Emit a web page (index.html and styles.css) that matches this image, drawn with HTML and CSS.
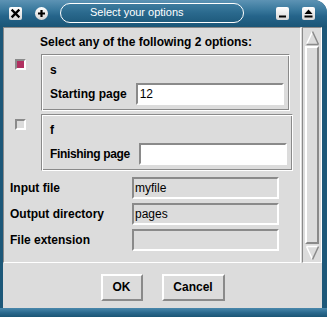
FILE: index.html
```html
<!DOCTYPE html>
<html>
<head>
<meta charset="utf-8">
<link rel="stylesheet" href="styles.css">
</head>
<body>
<div class="win">
  <div class="title">
    <span class="tbtn sq">
      <svg width="13" height="13" viewBox="0 0 13 13"><path d="M3.5 3.5 L9.5 9.5 M9.5 3.5 L3.5 9.5" stroke="#000" stroke-width="2.4" stroke-linecap="square"/></svg>
    </span>
    <span class="tbtn circ">
      <svg width="13" height="13" viewBox="0 0 13 13"><path d="M6.5 3 V10 M3 6.5 H10" stroke="#000" stroke-width="2.2"/></svg>
    </span>
    <div class="pill">Select your options</div>
    <span class="tbtn sq">
      <svg width="13" height="13" viewBox="0 0 13 13"><rect x="3" y="8.5" width="7" height="2" fill="#000"/></svg>
    </span>
    <span class="tbtn sq">
      <svg width="13" height="13" viewBox="0 0 13 13"><path d="M6.5 2.5 L10.5 7 H2.5 Z" fill="#000"/><rect x="2.5" y="8.5" width="8" height="2" fill="#000"/></svg>
    </span>
  </div>
  <div class="body">
    <div class="upper">
      <div class="frame">
        <div class="heading">Select any of the following 2 options:</div>
        <div class="opt">
          <span class="check on"></span>
          <div class="group">
            <div class="gname">s</div>
            <div class="field"><span class="lbl">Starting page</span><span class="entry white">12</span></div>
          </div>
        </div>
        <div class="opt">
          <span class="check"></span>
          <div class="group">
            <div class="gname">f</div>
            <div class="field"><span class="lbl tight">Finishing page</span><span class="entry white"></span></div>
          </div>
        </div>
        <div class="grid">
          <span class="lbl">Input file</span><span class="entry">myfile</span>
          <span class="lbl">Output directory</span><span class="entry">pages</span>
          <span class="lbl">File extension</span><span class="entry"></span>
        </div>
      </div>
      <div class="scrollbar">
        <div class="arrow">
          <svg width="15" height="16" viewBox="0 0 15 16"><path d="M7.5 1.5 L1.5 14.5" stroke="#fff" stroke-width="1.5"/><path d="M7.5 1.5 L13.5 14.5 M1.5 14.5 H13.5" stroke="#8a8a8a" stroke-width="1.5"/></svg>
        </div>
        <div class="slider"></div>
        <div class="arrow">
          <svg width="15" height="16" viewBox="0 0 15 16"><path d="M1.5 1.5 H13.5 M1.5 1.5 L7.5 14.5" stroke="#fff" stroke-width="1.5"/><path d="M13.5 1.5 L7.5 14.5" stroke="#8a8a8a" stroke-width="1.5"/></svg>
        </div>
      </div>
    </div>
    <div class="buttons">
      <span class="btn ok">OK</span>
      <span class="btn cancel">Cancel</span>
    </div>
  </div>
  <div class="bottombar"></div>
</div>
</body>
</html>
```

FILE: styles.css
```css
html, body {
  margin: 0;
  padding: 0;
  background: #ffffff;
}
.win {
  width: 327px;
  height: 317px;
  display: flex;
  flex-direction: column;
  background: #1d5879;
  border-top-right-radius: 13px;
  overflow: hidden;
  font-family: "Liberation Sans", Arial, sans-serif;
}
.title {
  height: 27px;
  flex: none;
  display: flex;
  align-items: center;
  background: linear-gradient(#5d93b4 0%, #3b7a9e 35%, #25648a 60%, #1b5677 100%);
  padding: 0 0 1px 9px;
  box-sizing: border-box;
}
.tbtn {
  width: 13px;
  height: 13px;
  flex: none;
  display: flex;
  background: linear-gradient(#ffffff, #d6d6d6);
  border-radius: 2px;
}
.tbtn svg { display: block; }
.tbtn.circ {
  border-radius: 50%;
  margin-left: 13px;
}
.pill {
  width: 184px;
  height: 20px;
  box-sizing: border-box;
  margin-left: 12px;
  margin-right: 32px;
  border: 1.5px solid #ffffff;
  border-radius: 11px;
  background: linear-gradient(#3e7c9f, #2a698d 50%, #1f5b7d);
  color: #ffffff;
  font-size: 11px;
  line-height: 17px;
  padding-left: 29px;
  white-space: nowrap;
}
.tbtn.sq + .tbtn.sq { margin-left: 13px; }
.body {
  flex: 1;
  margin: 0 5px 0 3px;
  background: #dcdcdc;
  display: flex;
  flex-direction: column;
}
.upper {
  height: 236px;
  display: flex;
  flex: none;
}
.frame {
  width: 298px;
  box-sizing: border-box;
  border: 1px solid;
  border-color: #8a8a8a #ffffff #ffffff #8a8a8a;
  padding: 7px 0 0 0;
  display: flex;
  flex-direction: column;
  align-items: flex-start;
}
.heading {
  font-size: 12px;
  font-weight: bold;
  line-height: 14px;
  margin-left: 36px;
  margin-bottom: 5px;
  color: #000;
}
.opt {
  display: flex;
  align-items: flex-start;
  margin-bottom: 3px;
}
.check {
  width: 11px;
  height: 11px;
  box-sizing: border-box;
  border: 2px solid;
  border-color: #8a8a8a #ffffff #ffffff #8a8a8a;
  background: #dcdcdc;
  margin: 5px 15px 0 11px;
}
.check.on { background: #b03060; }
.group {
  border: 1px solid;
  border-color: #8a8a8a #ffffff #ffffff #8a8a8a;
  box-shadow: inset 1px 1px 0 #ffffff, inset -1px -1px 0 #8a8a8a;
  padding: 8px 5px 5px 8px;
  display: flex;
  flex-direction: column;
}
.gname {
  font-size: 12px;
  font-weight: bold;
  line-height: 14px;
  margin-bottom: 6px;
}
.field {
  display: flex;
  align-items: center;
  gap: 9px;
}
.lbl {
  font-size: 12px;
  font-weight: bold;
  color: #000;
  white-space: nowrap;
}
.lbl.tight { letter-spacing: -0.35px; }
.entry {
  width: 148px;
  height: 22px;
  box-sizing: border-box;
  border: 2px solid;
  border-color: #8a8a8a #ffffff #ffffff #8a8a8a;
  background: #dcdcdc;
  font-size: 12px;
  line-height: 18px;
  padding-left: 1px;
  color: #000;
}
.entry.white {
  background: #ffffff;
  padding-left: 2px;
}
.grid {
  display: grid;
  grid-template-columns: 122px 147px;
  row-gap: 4px;
  margin: 3px 0 0 6px;
  align-items: center;
}
.grid .entry { width: 147px; }
.scrollbar {
  width: 20px;
  margin-left: 1px;
  box-sizing: border-box;
  border: 1px solid;
  border-color: #8a8a8a #ffffff #ffffff #8a8a8a;
  display: flex;
  flex-direction: column;
  padding: 1px;
}
.arrow {
  height: 17px;
  flex: none;
  display: flex;
  justify-content: center;
  align-items: center;
}
.slider {
  flex: 1;
  border: 2px solid;
  border-color: #ffffff #8a8a8a #8a8a8a #ffffff;
  margin: 0 1px;
}
.buttons {
  display: flex;
  justify-content: center;
  gap: 19px;
  padding-top: 11px;
}
.btn {
  height: 27px;
  box-sizing: border-box;
  border: 2px solid;
  border-color: #ffffff #8a8a8a #8a8a8a #ffffff;
  font-size: 12px;
  font-weight: bold;
  line-height: 23px;
  text-align: center;
  color: #000;
}
.btn.ok { width: 42px; }
.btn.cancel { width: 63px; }
.bottombar {
  height: 9px;
  flex: none;
  background: linear-gradient(#4a88ac, #2b6a8f 50%, #1b5575);
}
```
